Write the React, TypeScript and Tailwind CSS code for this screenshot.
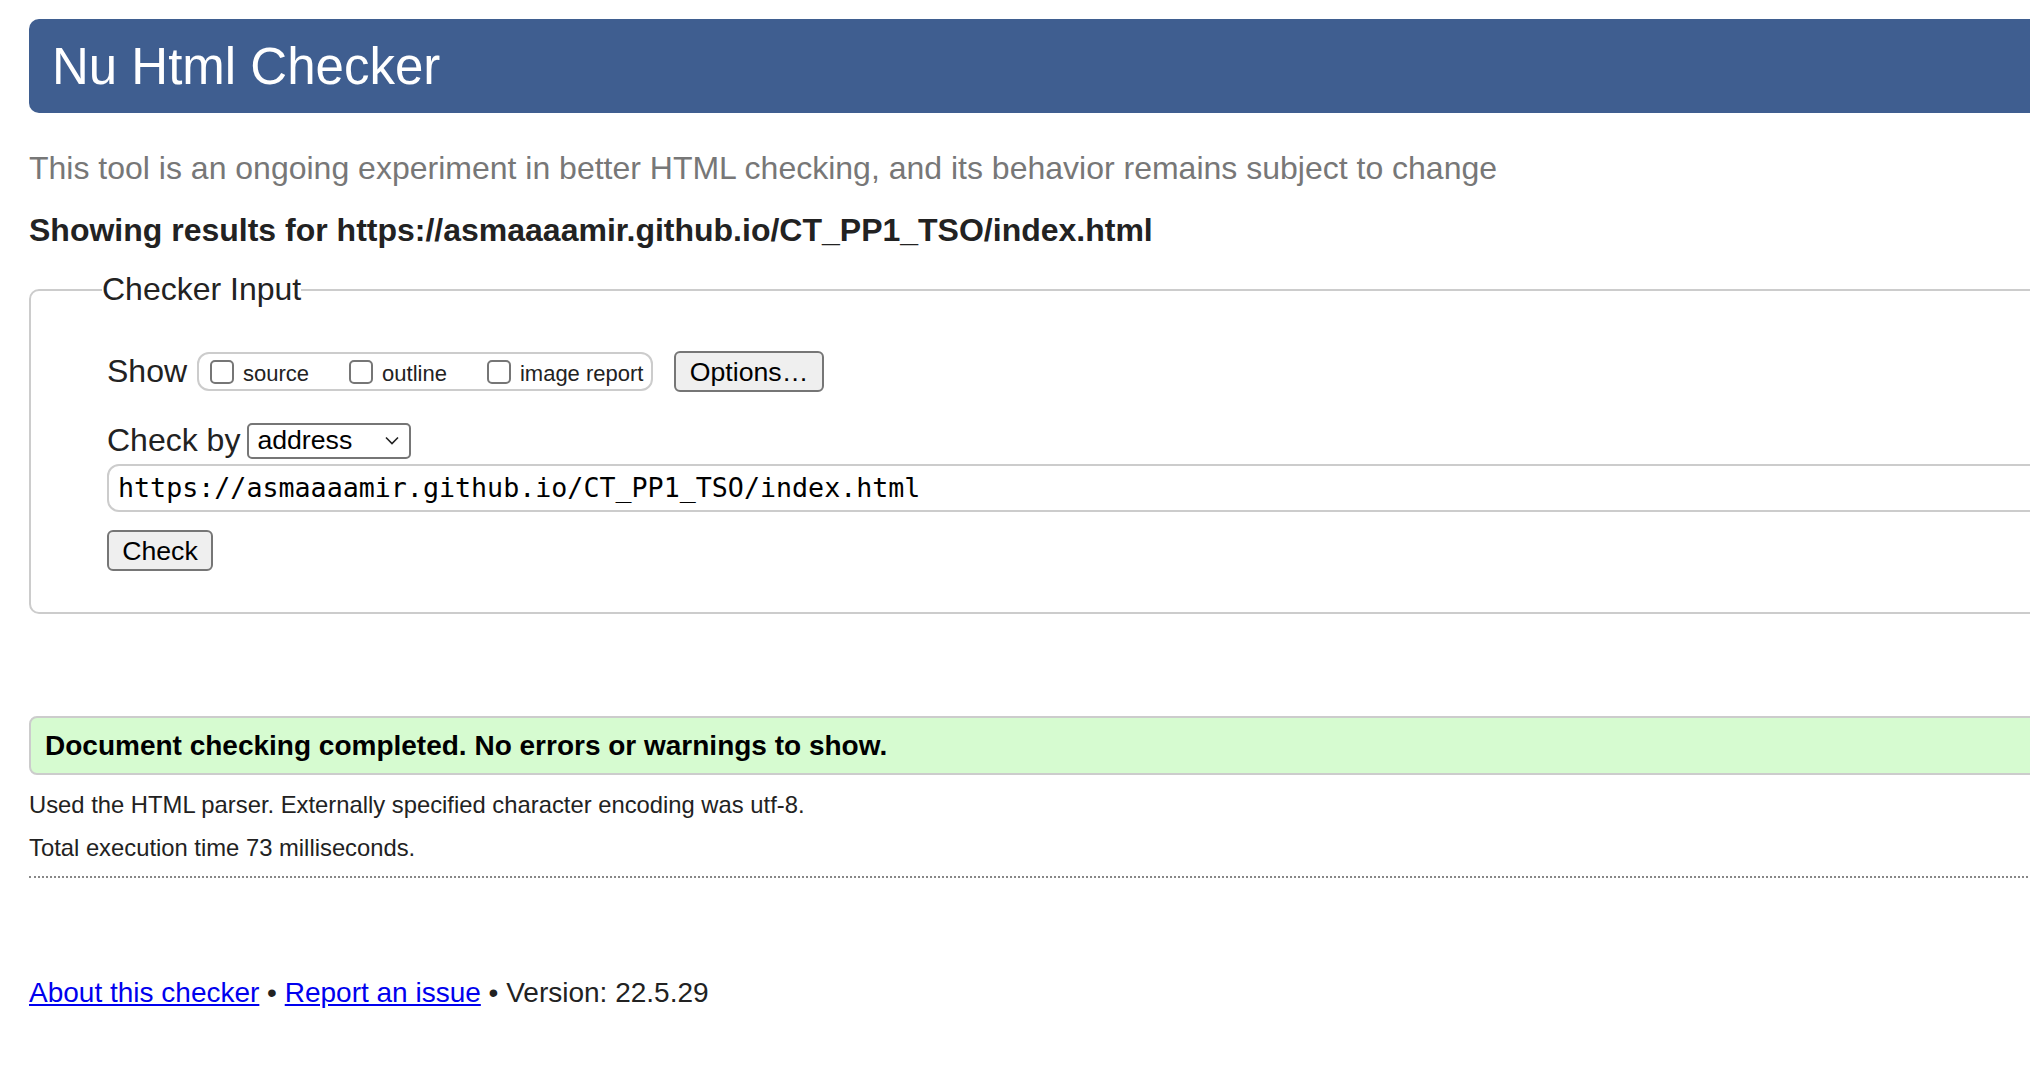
import React from "react";

const checks = ["source", "outline", "image report"];

function ChevronDown() {
  return (
    <svg width="14" height="9" viewBox="0 0 14 9" fill="none" className="shrink-0">
      <path d="M1 1.5 L7 7.5 L13 1.5" stroke="#222" strokeWidth="1.6" />
    </svg>
  );
}

export default function App() {
  return (
    <div className="min-h-screen w-full overflow-hidden bg-white font-['Liberation_Sans',Arial,sans-serif] text-[#222]">
      <div className="w-[2300px] pl-[29px] pt-[19px]">
        {/* banner */}
        <div className="flex h-[94px] items-center rounded-l-[10px] bg-[#3f5e90] pl-[23px]">
          <h1 className="text-[51px] leading-none text-white">Nu Html Checker</h1>
        </div>

        <p className="mt-[37px] text-[32px] leading-[37px] text-[#777]">
          This tool is an ongoing experiment in better HTML checking, and its behavior remains subject to change
        </p>
        <p className="mt-[25px] text-[32px] font-bold leading-[37px] text-[#222]">
          Showing results for https://asmaaaamir.github.io/CT_PP1_TSO/index.html
        </p>

        {/* checker input */}
        <fieldset className="mt-[22px] rounded-[10px] border-2 border-[#cccccc] pb-[41px] pl-[71px]">
          <legend className="text-[32px] leading-[37px]">Checker Input</legend>
          <div className="pl-[5px]">
            <div className="mt-[43px] flex h-[41px] items-center">
              <span className="text-[32px] leading-[37px]">Show</span>
              <div className="ml-[10px] flex h-[39px] w-[456px] items-center rounded-[12px] border-2 border-[#cccccc] pl-[11px]">
                {checks.map((c, i) => (
                  <label key={c} className={"flex items-center " + (i > 0 ? "ml-[40px]" : "")}>
                    <span className="h-[24px] w-[24px] rounded-[5px] border-2 border-[#767676] bg-white" />
                    <span className="ml-[9px] mt-[4px] text-[22px] leading-[26px] text-[#222]">{c}</span>
                  </label>
                ))}
              </div>
              <button className="ml-[21px] flex h-[41px] w-[150px] items-center justify-center rounded-[6px] border-2 border-[#767676] bg-[#efefef] text-[26.67px] text-black">
                Options…
              </button>
            </div>

            <div className="mt-[30px] flex h-[37px] items-center">
              <span className="text-[32px] leading-[37px]">Check by</span>
              <div className="ml-[7px] flex h-[36px] w-[164px] items-center justify-between rounded-[5px] border-2 border-[#767676] bg-white pl-[8px] pr-[10px]">
                <span className="text-[26.67px] leading-none text-black">address</span>
                <ChevronDown />
              </div>
            </div>

            <div className="mt-[5px] flex h-[48px] items-center rounded-[12px] border-2 border-[#cccccc] pl-[9px]">
              <span className="font-['DejaVu_Sans_Mono',monospace] text-[26.67px] leading-none text-black">
                https://asmaaaamir.github.io/CT_PP1_TSO/index.html
              </span>
            </div>

            <button className="mt-[18px] flex h-[41px] w-[106px] items-center justify-center rounded-[6px] border-2 border-[#767676] bg-[#efefef] text-[26.67px] text-black">
              Check
            </button>
          </div>
        </fieldset>

        {/* result */}
        <div className="mt-[102px] flex h-[59px] items-center rounded-[8px] border-2 border-[#cccccc] bg-[#d6fbd0] pl-[14px]">
          <span className="text-[28px] font-bold leading-none text-black">
            Document checking completed. No errors or warnings to show.
          </span>
        </div>
        <p className="mt-[16px] text-[23.8px] leading-[28px]">
          Used the HTML parser. Externally specified character encoding was utf-8.
        </p>
        <p className="mt-[15px] text-[23.8px] leading-[28px]">Total execution time 73 milliseconds.</p>
        <div className="mt-[14px] border-t-2 border-dotted border-[#888]" />

        {/* footer */}
        <p className="mt-[99px] text-[28px] leading-[32px]">
          <a href="#" className="text-[#0000ee] underline">About this checker</a>
          {" • "}
          <a href="#" className="text-[#0000ee] underline">Report an issue</a>
          {" • Version: 22.5.29"}
        </p>
      </div>
    </div>
  );
}
